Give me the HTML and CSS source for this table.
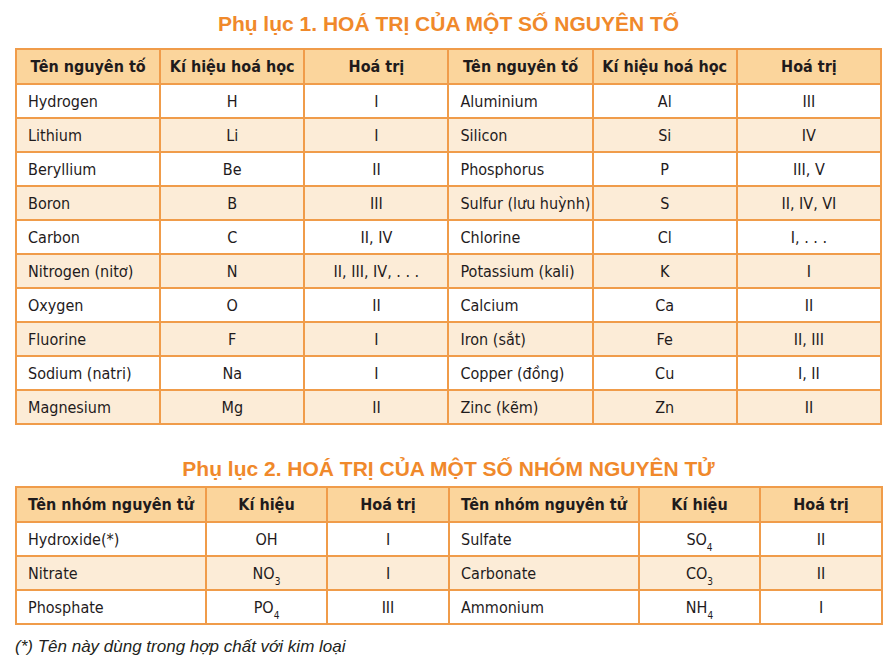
FILE: index.html
```html
<!DOCTYPE html>
<html lang="vi">
<head>
<meta charset="utf-8">
<link rel="stylesheet" href="styles.css">
</head>
<body>
<div class="page">
  <h2 class="title t1">Phụ lục 1. HOÁ TRỊ CỦA MỘT SỐ NGUYÊN TỐ</h2>
  <table class="tbl tbl1">
    <colgroup><col><col><col><col><col><col></colgroup>
    <thead>
      <tr><th>Tên nguyên tố</th><th>Kí hiệu hoá học</th><th>Hoá trị</th><th>Tên nguyên tố</th><th>Kí hiệu hoá học</th><th>Hoá trị</th></tr>
    </thead>
    <tbody>
      <tr><td class="n">Hydrogen</td><td>H</td><td>I</td><td class="n">Aluminium</td><td>Al</td><td>III</td></tr>
      <tr class="alt"><td class="n">Lithium</td><td>Li</td><td>I</td><td class="n">Silicon</td><td>Si</td><td>IV</td></tr>
      <tr><td class="n">Beryllium</td><td>Be</td><td>II</td><td class="n">Phosphorus</td><td>P</td><td>III, V</td></tr>
      <tr class="alt"><td class="n">Boron</td><td>B</td><td>III</td><td class="n">Sulfur (lưu huỳnh)</td><td>S</td><td>II, IV, VI</td></tr>
      <tr><td class="n">Carbon</td><td>C</td><td>II, IV</td><td class="n">Chlorine</td><td>Cl</td><td>I, . . .</td></tr>
      <tr class="alt"><td class="n">Nitrogen (nitơ)</td><td>N</td><td>II, III, IV, . . .</td><td class="n">Potassium (kali)</td><td>K</td><td>I</td></tr>
      <tr><td class="n">Oxygen</td><td>O</td><td>II</td><td class="n">Calcium</td><td>Ca</td><td>II</td></tr>
      <tr class="alt"><td class="n">Fluorine</td><td>F</td><td>I</td><td class="n">Iron (sắt)</td><td>Fe</td><td>II, III</td></tr>
      <tr><td class="n">Sodium (natri)</td><td>Na</td><td>I</td><td class="n">Copper (đồng)</td><td>Cu</td><td>I, II</td></tr>
      <tr class="alt"><td class="n">Magnesium</td><td>Mg</td><td>II</td><td class="n">Zinc (kẽm)</td><td>Zn</td><td>II</td></tr>
    </tbody>
  </table>

  <h2 class="title t2">Phụ lục 2. HOÁ TRỊ CỦA MỘT SỐ NHÓM NGUYÊN TỬ</h2>
  <table class="tbl tbl2">
    <colgroup><col class="w1"><col class="w2"><col class="w3"><col class="w1"><col class="w2"><col class="w3"></colgroup>
    <thead>
      <tr><th>Tên nhóm nguyên tử</th><th>Kí hiệu</th><th>Hoá trị</th><th>Tên nhóm nguyên tử</th><th>Kí hiệu</th><th>Hoá trị</th></tr>
    </thead>
    <tbody>
      <tr><td class="n">Hydroxide(*)</td><td>OH</td><td>I</td><td class="n">Sulfate</td><td>SO<sub>4</sub></td><td>II</td></tr>
      <tr class="alt"><td class="n">Nitrate</td><td>NO<sub>3</sub></td><td>I</td><td class="n">Carbonate</td><td>CO<sub>3</sub></td><td>II</td></tr>
      <tr><td class="n">Phosphate</td><td>PO<sub>4</sub></td><td>III</td><td class="n">Ammonium</td><td>NH<sub>4</sub></td><td>I</td></tr>
    </tbody>
  </table>
  <p class="note">(*) Tên này dùng trong hợp chất với kim loại</p>
</div>
</body>
</html>
```

FILE: styles.css
```css
html, body {
  margin: 0;
  padding: 0;
  background: #ffffff;
}

.page {
  width: 867px;
  padding: 0 10px 0 15px;
  font-family: "DejaVu Sans Condensed", "Liberation Sans", Arial, sans-serif;
  color: #1f1b1c;
}

.title {
  margin: 0;
  text-align: center;
  font-family: "Liberation Sans", Arial, sans-serif;
  font-weight: 700;
  font-size: 21px;
  color: #f0892b;
}

.t1 {
  height: 48px;
  line-height: 48px;
}

.t2 {
  height: 36px;
  line-height: 38px;
  margin-top: 25px;
}

.tbl {
  width: 867px;
  border-collapse: collapse;
  table-layout: fixed;
  font-size: 16px;
}

.tbl th,
.tbl td {
  border: 2px solid #f09c4a;
  padding: 0;
  text-align: center;
  vertical-align: middle;
  white-space: nowrap;
}

.tbl th {
  background: #fbd59c;
  font-weight: 700;
  font-size: 16px;
  height: 33px;
}

.tbl td {
  height: 32px;
}

.tbl td.n {
  text-align: left;
  padding-left: 11px;
}

.tbl tr.alt td {
  background: #fcecd7;
}

.tbl2 .w1 { width: 190px; }
.tbl2 .w2 { width: 121px; }
.tbl2 .w3 { width: 122px; }

.tbl2 td {
  height: 32px;
}

sub {
  font-size: 10px;
  vertical-align: -6px;
  line-height: 0;
}

.note {
  margin: 12px 0 0 0;
  font-family: "Liberation Sans", Arial, sans-serif;
  font-style: italic;
  font-size: 17px;
  color: #231f20;
}
```
